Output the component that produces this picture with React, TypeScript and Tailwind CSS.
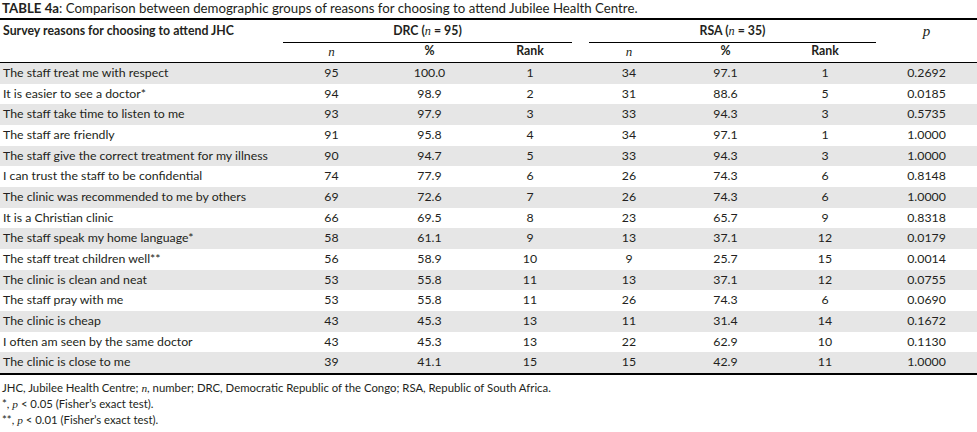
import React from 'react';

// survey rows: reason, DRC n, %, rank, RSA n, %, rank, p
const rows: [string, string, string, string, string, string, string, string][] = [
  ['The staff treat me with respect', '95', '100.0', '1', '34', '97.1', '1', '0.2692'],
  ['It is easier to see a doctor*', '94', '98.9', '2', '31', '88.6', '5', '0.0185'],
  ['The staff take time to listen to me', '93', '97.9', '3', '33', '94.3', '3', '0.5735'],
  ['The staff are friendly', '91', '95.8', '4', '34', '97.1', '1', '1.0000'],
  ['The staff give the correct treatment for my illness', '90', '94.7', '5', '33', '94.3', '3', '1.0000'],
  ['I can trust the staff to be confidential', '74', '77.9', '6', '26', '74.3', '6', '0.8148'],
  ['The clinic was recommended to me by others', '69', '72.6', '7', '26', '74.3', '6', '1.0000'],
  ['It is a Christian clinic', '66', '69.5', '8', '23', '65.7', '9', '0.8318'],
  ['The staff speak my home language*', '58', '61.1', '9', '13', '37.1', '12', '0.0179'],
  ['The staff treat children well**', '56', '58.9', '10', '9', '25.7', '15', '0.0014'],
  ['The clinic is clean and neat', '53', '55.8', '11', '13', '37.1', '12', '0.0755'],
  ['The staff pray with me', '53', '55.8', '11', '26', '74.3', '6', '0.0690'],
  ['The clinic is cheap', '43', '45.3', '13', '11', '31.4', '14', '0.1672'],
  ['I often am seen by the same doctor', '43', '45.3', '13', '22', '62.9', '10', '0.1130'],
  ['The clinic is close to me', '39', '41.1', '15', '15', '42.9', '11', '1.0000'],
];

const cols = 'grid grid-cols-[283px_97px_99px_102px_96px_97px_102px_1fr]';

function It({ children }: { children: React.ReactNode }) {
  return <i className="font-['Liberation_Serif',serif] font-normal">{children}</i>;
}

export default function App() {
  return (
    <div className="w-[977px] h-[432px] bg-white text-[#231f20] font-['Lato',sans-serif] text-[12.3px] overflow-hidden">
      {/* Title */}
      <div className="h-[18px] px-[2px] flex items-center text-[13.25px] leading-none">
        <span className="font-bold">TABLE 4a</span>: Comparison between demographic groups of reasons for choosing to attend Jubilee Health Centre.
      </div>
      <div className="border-t-2 border-black" />

      {/* Header */}
      <div className={`${cols} font-bold h-[21px]`}>
        <div className="pl-[3px] flex items-center whitespace-nowrap">Survey reasons for choosing to attend JHC</div>
        <div className="col-span-3 mr-[9px] border-b border-black flex items-center justify-center">
          <span>DRC (<It>n</It> = 95)</span>
        </div>
        <div className="col-span-3 ml-[8px] border-b border-black flex items-center justify-center">
          <span>RSA (<It>n</It> = 35)</span>
        </div>
        <div className="flex items-center justify-center text-[15px]">
          <It>p</It>
        </div>
      </div>
      <div className={`${cols} font-bold h-[22px] border-b border-black items-center text-center`}>
        <div />
        <div className="text-[13px]"><It>n</It></div>
        <div>%</div>
        <div>Rank</div>
        <div className="text-[13px]"><It>n</It></div>
        <div>%</div>
        <div>Rank</div>
        <div />
      </div>

      {/* Body */}
      <div className="border-b-2 border-black">
        {rows.map((r, i) => (
          <div key={i} className={`${cols} h-[20.67px] items-center ${i % 2 === 0 ? 'bg-[#e6e6e6]' : ''}`}>
            <div className="pl-[3px] whitespace-nowrap">{r[0]}</div>
            {r.slice(1).map((v, j) => (
              <div key={j} className="text-center">{v}</div>
            ))}
          </div>
        ))}
      </div>

      {/* Footnotes */}
      <div className="pl-[2px] pt-[5px] text-[11.35px] leading-[15px]">
        <div>JHC, Jubilee Health Centre; <It>n</It>, number; DRC, Democratic Republic of the Congo; RSA, Republic of South Africa.</div>
        <div>*, <It>p</It> &lt; 0.05 (Fisher’s exact test).</div>
        <div>**, <It>p</It> &lt; 0.01 (Fisher’s exact test).</div>
      </div>
    </div>
  );
}
